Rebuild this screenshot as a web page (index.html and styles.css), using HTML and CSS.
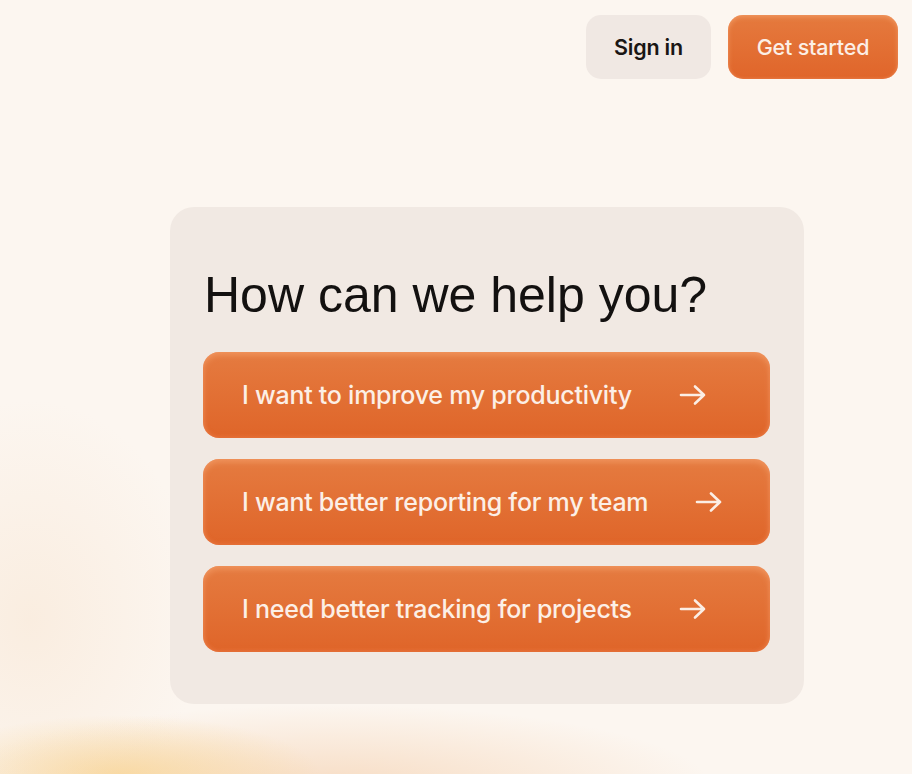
FILE: index.html
```html
<!DOCTYPE html>
<html lang="en">
<head>
<meta charset="utf-8">
<title>How can we help you?</title>
<link rel="stylesheet" href="styles.css">
</head>
<body>
<div class="glow"></div>
<header class="topbar">
  <a class="btn btn-ghost" href="#">Sign in</a>
  <a class="btn btn-primary" href="#">Get started</a>
</header>
<main class="main">
  <section class="card">
    <h1 class="title">How can we help you?</h1>
    <div class="options">
      <a class="option" href="#"><span>I want to improve my productivity</span>
        <svg class="arrow" viewBox="0 0 28 22" width="28" height="22"><path d="M2 11H25M16 2.5L25 11L16 19.5" fill="none" stroke="currentColor" stroke-width="2.6" stroke-linecap="round" stroke-linejoin="round"/></svg></a>
      <a class="option" href="#"><span>I want better reporting for my team</span>
        <svg class="arrow" viewBox="0 0 28 22" width="28" height="22"><path d="M2 11H25M16 2.5L25 11L16 19.5" fill="none" stroke="currentColor" stroke-width="2.6" stroke-linecap="round" stroke-linejoin="round"/></svg></a>
      <a class="option" href="#"><span>I need better tracking for projects</span>
        <svg class="arrow" viewBox="0 0 28 22" width="28" height="22"><path d="M2 11H25M16 2.5L25 11L16 19.5" fill="none" stroke="currentColor" stroke-width="2.6" stroke-linecap="round" stroke-linejoin="round"/></svg></a>
    </div>
  </section>
</main>
</body>
</html>
```
FILE: styles.css
```css
* { box-sizing: border-box; }
html, body { margin: 0; }
body {
  height: 774px;
  overflow: hidden;
  background: #fcf6f0;
  font-family: "Inter", "Liberation Sans", sans-serif;
  position: relative;
}
.glow {
  position: absolute;
  inset: 0;
  pointer-events: none;
  background:
    radial-gradient(ellipse 200px 60px at 120px 775px, rgba(248, 210, 140, 0.7), rgba(248, 210, 140, 0) 100%),
    radial-gradient(ellipse 380px 80px at 330px 785px, rgba(243, 200, 160, 0.55), rgba(243, 200, 160, 0) 100%),
    radial-gradient(ellipse 170px 220px at 30px 620px, rgba(247, 226, 204, 0.45), rgba(247, 226, 204, 0) 100%);
}
.topbar {
  position: relative;
  display: flex;
  justify-content: flex-end;
  gap: 17px;
  padding: 15px 14px 0 0;
}
.btn {
  display: flex;
  align-items: center;
  justify-content: center;
  height: 64px;
  border-radius: 15px;
  font-size: 21.5px;
  font-weight: 500;
  text-decoration: none;
  letter-spacing: -0.2px;
}
.btn-ghost {
  width: 125px;
  background: #f0e8e3;
  color: #1a1614;
  font-weight: 600;
}
.btn-primary {
  width: 170px;
  color: #fcefe6;
  background: linear-gradient(#e57a3e, #e0652a);
  box-shadow: inset 0 2px 5px rgba(255, 190, 140, 0.45), inset 0 -1px 3px rgba(240, 130, 80, 0.4);
}
.main {
  position: relative;
  padding: 128px 0 0 170px;
}
.card {
  width: 634px;
  background: #f1e9e3;
  border-radius: 24px;
  padding: 58px 34px 52px 33px;
}
.title {
  margin: 0 0 27px 1px;
  font-family: "Liberation Sans", Arial, sans-serif;
  font-weight: 400;
  font-size: 50px;
  line-height: 60px;
  letter-spacing: 0;
  color: #131110;
}
.options {
  display: flex;
  flex-direction: column;
  gap: 21px;
}
.option {
  display: flex;
  align-items: center;
  gap: 47px;
  height: 86px;
  padding-left: 39px;
  border-radius: 16px;
  text-decoration: none;
  color: #fcefe6;
  font-size: 25px;
  font-weight: 500;
  letter-spacing: -0.25px;
  background: linear-gradient(#e57b40, #df6529);
  box-shadow: inset 0 3px 6px rgba(255, 185, 135, 0.45), inset 0 -2px 4px rgba(238, 120, 70, 0.4);
}
.arrow { flex: none; color: #fbeee5; }
```
